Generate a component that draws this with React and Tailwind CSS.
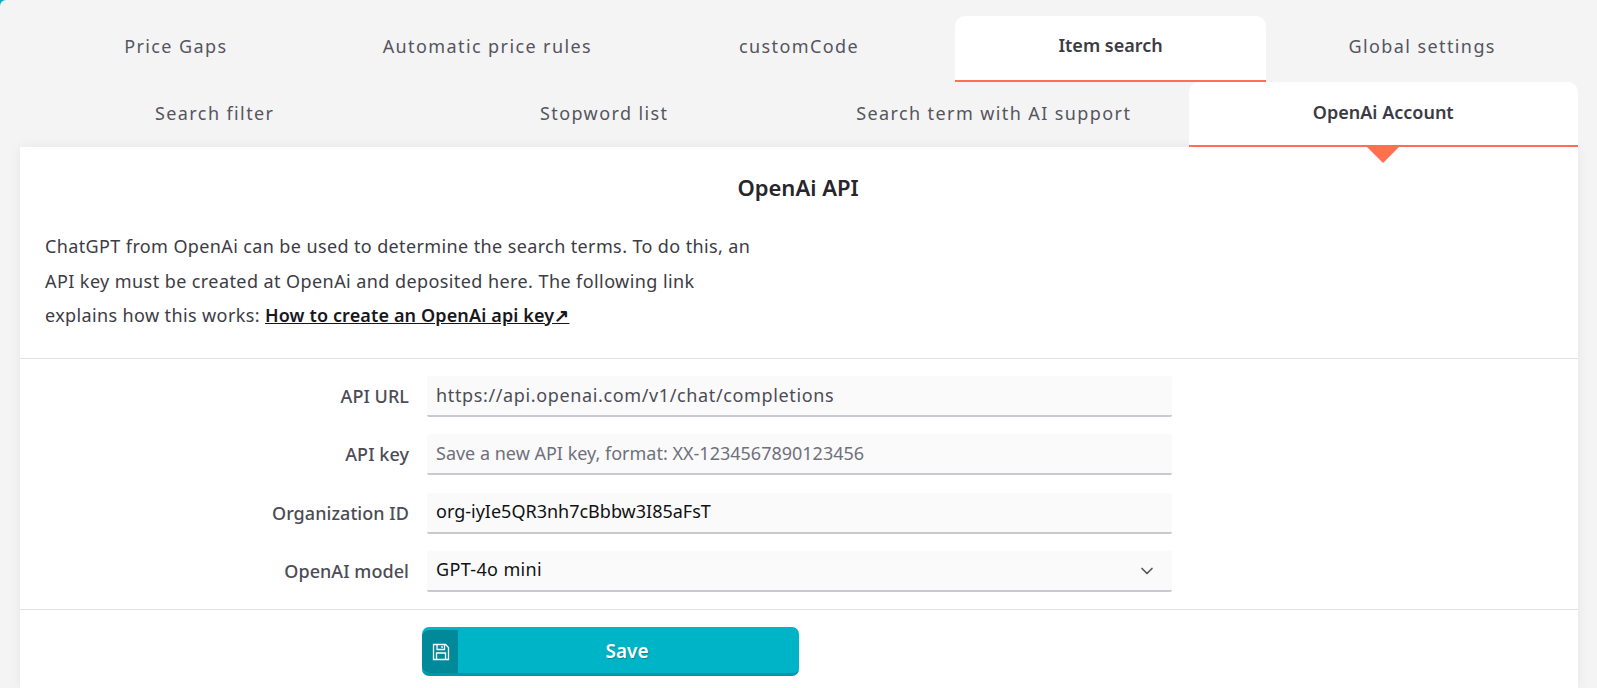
import React from "react";
import { ChevronDown } from "lucide-react";

const row1 = ["Price Gaps", "Automatic price rules", "customCode", "Item search", "Global settings"];
const row2 = ["Search filter", "Stopword list", "Search term with AI support", "OpenAi Account"];

function Tab({ label, active, arrow, pad }) {
  return (
    <div
      className={
        "relative flex items-center justify-center rounded-t-[10px] " +
        (active
          ? "bg-white border-b-2 border-[#ff6f50] font-semibold text-[#3b3b44] tracking-[0px]"
          : "text-[#55555f] tracking-[1.4px]")
      }
    >
      <span className={pad}>{label}</span>
      {arrow && (
        <span className="absolute left-1/2 -translate-x-1/2 top-full mt-[2px] w-0 h-0 border-l-[16px] border-r-[16px] border-t-[16px] border-l-transparent border-r-transparent border-t-[#ff6f50] z-10" />
      )}
    </div>
  );
}

function Field({ label, children }) {
  return (
    <div className="flex items-center h-[41px] mb-[17.33px]">
      <label className="w-[407px] pr-[18px] text-right font-medium text-[#4c4c56] text-[18px] tracking-[0.05px]">{label}</label>
      {children}
    </div>
  );
}

const inputCls =
  "w-[745px] h-[41px] px-[9px] pb-[2px] bg-[#fafafa] border-b-2 border-[#c9c9d0] rounded-[2px] outline-none text-[18px] placeholder:text-[#70707c]";

export default function App() {
  return (
    <div className="w-[1597px] h-[688px] bg-[#00b4c8] overflow-hidden" style={{ fontFamily: '"Noto Sans", "Open Sans", sans-serif' }}>
      <div className="h-full bg-[#f4f4f4] rounded-tl-[6px] pl-5 pr-[19px] pt-4 flex flex-col text-[18px]">
        <div className="grid grid-cols-5 h-[66px]">
          {row1.map((t) => (
            <Tab key={t} label={t} active={t === "Item search"} pad="pb-[5px]" />
          ))}
        </div>
        <div className="grid grid-cols-4 h-[65px]">
          {row2.map((t) => (
            <Tab key={t} label={t} active={t === "OpenAi Account"} arrow={t === "OpenAi Account"} pad="pb-[3px]" />
          ))}
        </div>
        <div className="flex-1 bg-white shadow-[0_0_12px_rgba(0,0,0,0.06)] flex flex-col">
          <h2 className="text-center font-semibold text-[22px] text-[#26262c] h-[64px] pt-[24px] leading-[32px] pr-[2px]">OpenAi API</h2>
          <p className="pl-[25px] w-[790px] mt-[18px] text-[#3c3c44] text-[18px] leading-[34.5px] h-[129px] tracking-[0.38px]">
            ChatGPT from OpenAi can be used to determine the search terms. To do this, an<br />
            <span className="tracking-[0.42px]">API key must be created at OpenAi and deposited here. The following link</span><br />
            explains how this works:{" "}
            <a className="font-semibold text-[#18181c] underline tracking-[0.13px]">How to create an OpenAi api key↗</a>
          </p>
          <div className="border-t border-[#e2e2e4] pt-[17px]">
            <Field label="API URL">
              <input readOnly value="https://api.openai.com/v1/chat/completions" className={inputCls + " text-[#4c4c56] tracking-[0.63px]"} />
            </Field>
            <Field label="API key">
              <input readOnly placeholder="Save a new API key, format: XX-1234567890123456" className={inputCls} />
            </Field>
            <Field label="Organization ID">
              <input readOnly value="org-iyIe5QR3nh7cBbbw3I85aFsT" className={inputCls + " text-[#111114]"} />
            </Field>
            <Field label="OpenAI model">
              <div className={inputCls + " relative flex items-center text-[#111114] tracking-[0.35px]"}>
                <span>GPT-4o mini</span>
                <ChevronDown className="absolute right-[15px] top-[10px] w-[20px] h-[20px] text-[#55555f]" strokeWidth={2} />
              </div>
            </Field>
          </div>
          <div className="border-t border-[#e2e2e4] pt-[17px] pl-[402px]">
            <button className="relative w-[377px] h-[49px] flex bg-[#00b4c8] rounded-[7px] border-b-[3px] border-[#0097a8] text-white overflow-hidden">
              <span className="mt-[3px] w-[36px] h-[43px] pl-[2px] pt-[1px] bg-[#008a99] rounded-tl-[7px] rounded-bl-[7px] flex items-center justify-center">
                <svg width="18" height="18" viewBox="0 0 18 18" fill="none" stroke="white" strokeWidth="1.3">
                  <path d="M1.5 1.5h12l3 3v12h-15z" />
                  <path d="M5 1.5v5h7.5v-5M10 3v2" />
                  <path d="M4.5 16.5v-6.5h9v6.5" />
                </svg>
              </span>
              <span className="flex-1 text-center font-semibold text-[19px] leading-[49px] pr-[3px] [text-shadow:1px_1px_1px_rgba(0,0,0,0.25)]">Save</span>
            </button>
          </div>
        </div>
      </div>
    </div>
  );
}
